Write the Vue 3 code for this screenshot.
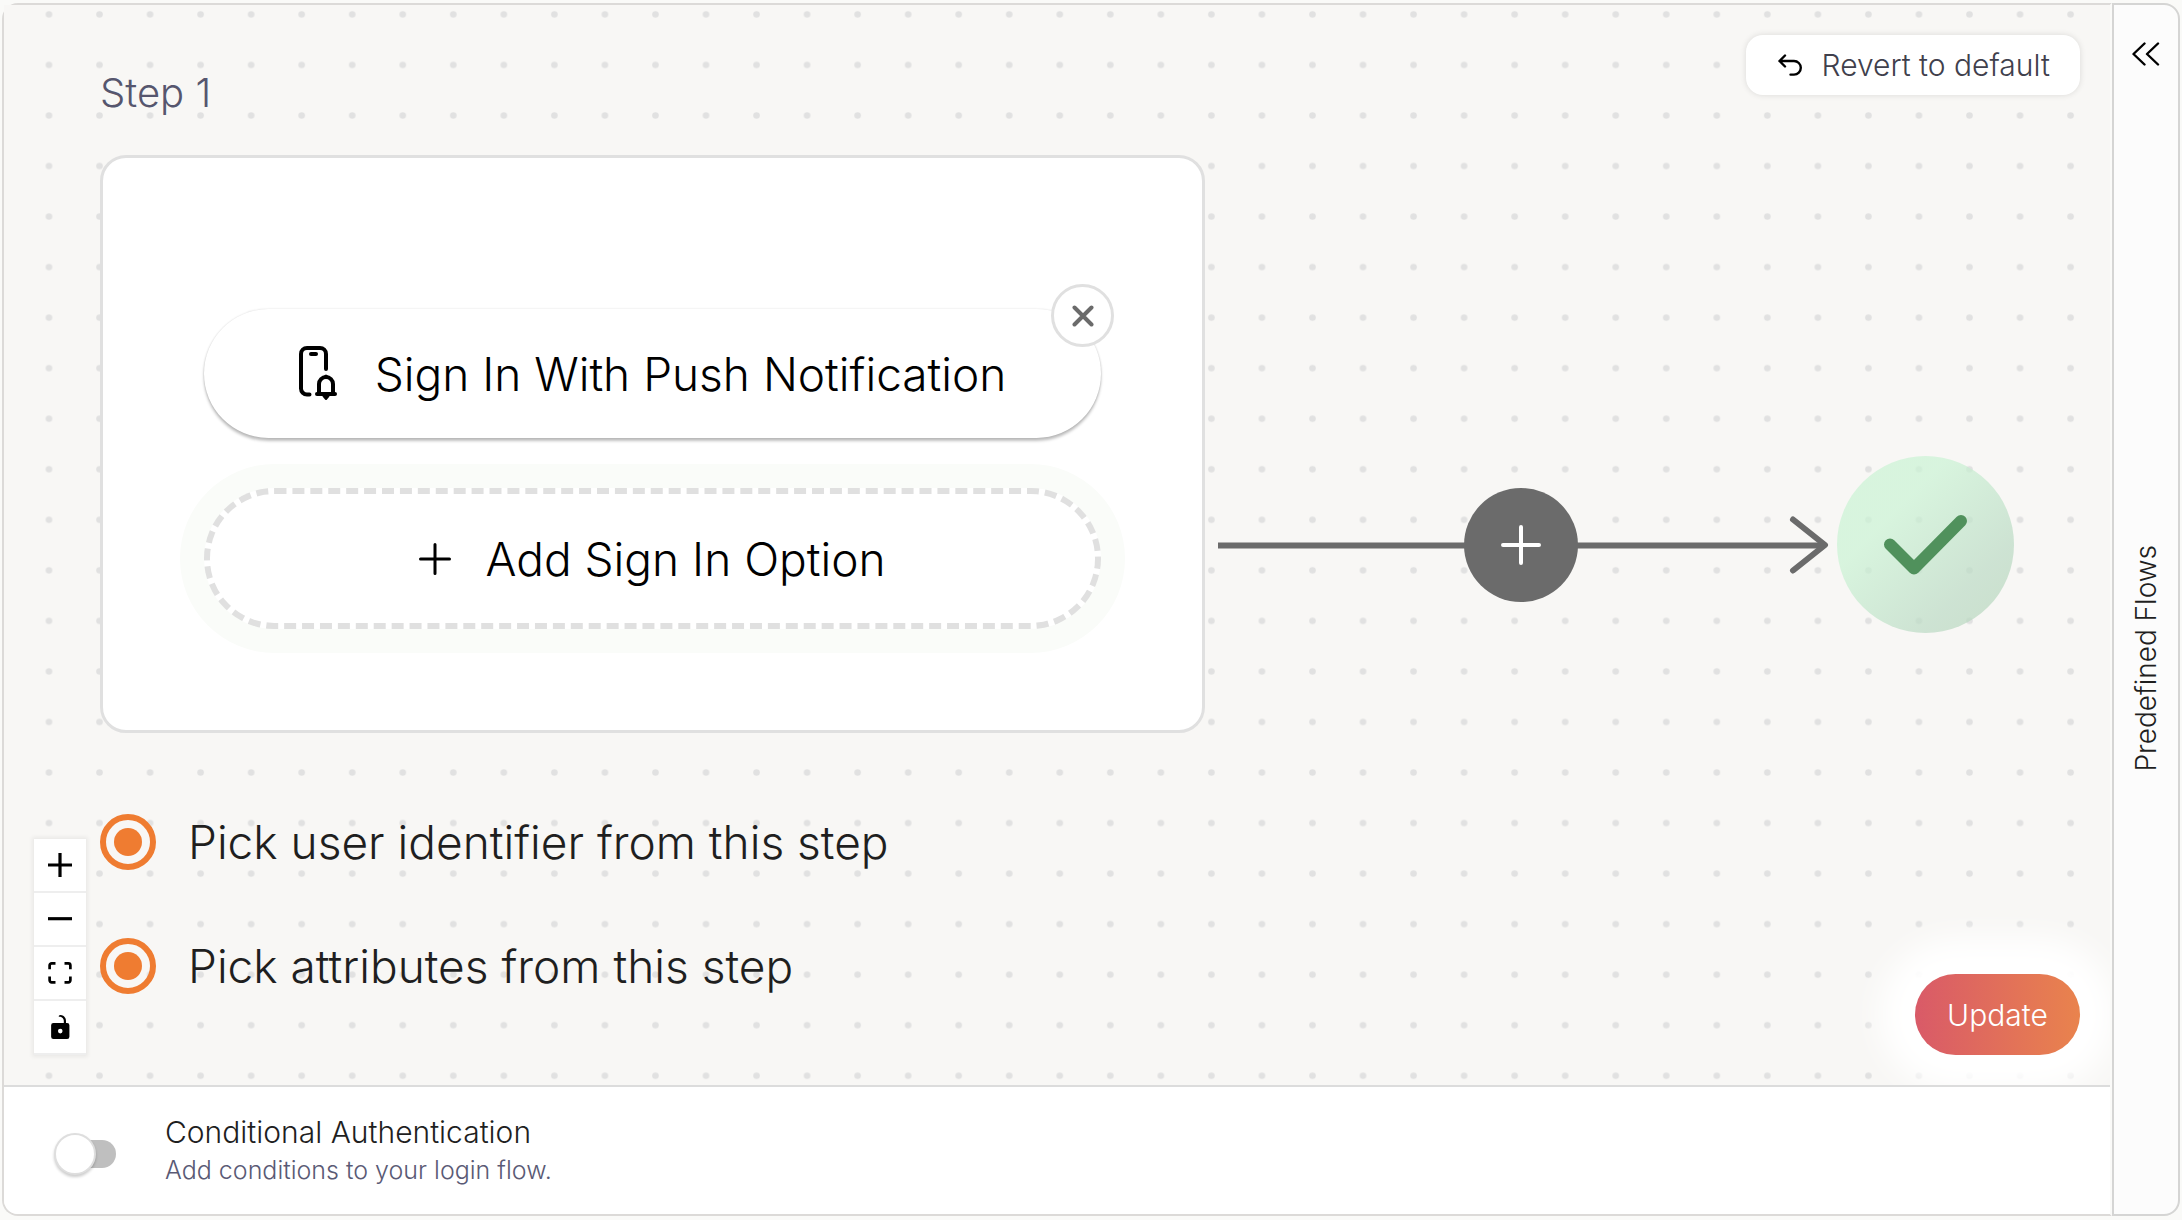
<script setup>
import { ref } from 'vue'

const zoom = 2.527
const identifierStep = ref('step-1')
const attributeStep = ref('step-1')
const conditional = ref(false)

const controls = [
  { label: 'Zoom in', box: '0 0 32 32', w: 24, h: 24, d: 'M32 18.133H18.133V32h-4.266V18.133H0v-4.266h13.867V0h4.266v13.867H32z' },
  { label: 'Zoom out', box: '0 0 32 5', w: 24, h: 4, d: 'M0 0h32v4.2H0z' },
  { label: 'Fit view', box: '0 0 32 30', w: 24, h: 22, d: 'M3.692 4.63c0-.53.4-.938.939-.938h5.215V0H4.708C2.13 0 0 2.054 0 4.63v5.216h3.692V4.631zM27.354 0h-5.2v3.692h5.17c.53 0 .984.4.984.939v5.215H32V4.631A4.624 4.624 0 0027.354 0zm.954 24.83c0 .532-.4.94-.939.94h-5.215v3.768h5.215c2.577 0 4.631-2.13 4.631-4.707v-5.139h-3.692v5.139zm-23.677.94c-.531 0-.939-.4-.939-.94v-5.138H0v5.139c0 2.577 2.13 4.707 4.708 4.707h5.138V25.77H4.631z' },
  { label: 'Lock canvas', box: '0 0 25 32', w: 19, h: 24, d: 'M21.333 10.667H19.81V7.619C19.81 3.429 16.38 0 12.19 0c-4.114 1.828-1.37 2.133.305 2.438 1.676.305 4.42 2.59 4.42 5.181v3.048H3.047A3.056 3.056 0 000 13.714v15.238A3.056 3.056 0 003.048 32h18.285a3.056 3.056 0 003.048-3.048V13.714a3.056 3.056 0 00-3.048-3.047zM12.19 24.533a3.056 3.056 0 01-3.047-3.047 3.056 3.056 0 013.047-3.048 3.056 3.056 0 013.048 3.048 3.056 3.056 0 01-3.048 3.047z' },
]
</script>

<template>
  <div class="builder">
    <main class="editor">
      <section class="canvas" aria-label="Login flow">
        <svg class="grid" aria-hidden="true">
          <defs>
            <pattern id="dots" width="20" height="20" x="8" y="-6.2" patternUnits="userSpaceOnUse" :patternTransform="`translate(-0.5 -0.2) scale(${zoom})`">
              <circle cx="10" cy="10" r="1.3" fill="#e1e1e1" />
            </pattern>
          </defs>
          <rect width="100%" height="100%" fill="url(#dots)" />
        </svg>

        <article class="step">
          <h2 class="step-title">Step 1</h2>
          <div class="card">
            <div class="option">
              <svg width="38" height="55" viewBox="0 0 38 55" fill="none" stroke="#000" stroke-width="4" stroke-linecap="round" stroke-linejoin="round" aria-hidden="true">
                <path d="M10.5 48.5H8a6 6 0 0 1-6-6V8a6 6 0 0 1 6-6h13a6 6 0 0 1 6 6v15" />
                <path d="M12 8h5" />
                <path d="M20 46.500V38a7 7 0 0 1 14 0v8.500" stroke-width="4" />
                <path d="M18 48h18" stroke-width="4" />
                <path d="M24.500 50h5l-2.500 3z M25 31l2-1.500 2 1.500z" fill="#000" stroke-width="2" />
              </svg>
              <span>Sign In With Push Notification</span>
              <button class="remove" type="button" aria-label="Remove option">
                <svg width="22" height="22" viewBox="0 0 22 22" stroke="#6b6b6b" stroke-width="4" stroke-linecap="round" aria-hidden="true">
                  <path d="M2.500 2.500l17 17M19.500 2.500l-17 17" />
                </svg>
              </button>
            </div>
            <button class="add-option" type="button">
              <svg width="32" height="32" viewBox="0 0 32 32" stroke="#000" stroke-width="3" stroke-linecap="round" aria-hidden="true">
                <path d="M16 1.500v29M1.500 16h29" />
              </svg>
              <span>Add Sign In Option</span>
            </button>
          </div>
          <div class="picks">
            <label class="pick">
              <input v-model="identifierStep" type="radio" name="identifier" value="step-1">
              <span>Pick user identifier from this step</span>
            </label>
            <label class="pick">
              <input v-model="attributeStep" type="radio" name="attributes" value="step-1">
              <span>Pick attributes from this step</span>
            </label>
          </div>
        </article>

        <svg class="edge" width="612" height="114" viewBox="0 0 612 114" fill="none" stroke="#6b6b6b" stroke-width="6" aria-hidden="true">
          <path d="M0 57.500H605" />
          <path d="M575 31.500L607 57l-32 25.500" stroke-linecap="round" stroke-linejoin="round" />
        </svg>
        <button class="add-step" type="button" aria-label="Add step">
          <svg width="40" height="40" viewBox="0 0 40 40" stroke="#fff" stroke-width="4" stroke-linecap="round" aria-hidden="true">
            <path d="M20 2v36M2 20h36" />
          </svg>
        </button>
        <div class="done" role="img" aria-label="Login complete">
          <svg width="177" height="177" viewBox="0 0 177 177" fill="none" stroke="#50915c" stroke-width="12" stroke-linecap="round" stroke-linejoin="round" aria-hidden="true">
            <path d="M53 88.500L77 112.500L124 65" />
          </svg>
        </div>

        <button class="revert" type="button">
          <svg width="24" height="22" viewBox="0 0 24 22" fill="none" stroke="#000" stroke-width="2.400" stroke-linecap="round" stroke-linejoin="round" aria-hidden="true">
            <path d="M7 1.500L1.500 7L7 12.500M1.500 7H16a6.800 6.800 0 0 1 0 13.600H12.500" />
          </svg>
          <span>Revert to default</span>
        </button>

        <div class="controls">
          <button v-for="c in controls" :key="c.label" type="button" :aria-label="c.label">
            <svg :width="c.w" :height="c.h" :viewBox="c.box" aria-hidden="true"><path :d="c.d" /></svg>
          </button>
        </div>

        <button class="update" type="button">Update</button>
      </section>

      <footer class="conditional">
        <input id="conditional" v-model="conditional" class="toggle" type="checkbox" role="switch">
        <div>
          <label class="conditional-title" for="conditional">Conditional Authentication</label>
          <p class="conditional-hint">Add conditions to your login flow.</p>
        </div>
      </footer>
    </main>

    <aside class="flows">
      <button class="expand" type="button" aria-label="Expand predefined flows">
        <svg width="28" height="24" viewBox="0 0 28 24" fill="none" stroke="#000" stroke-width="2.400" stroke-linecap="round" stroke-linejoin="round" aria-hidden="true">
          <path d="M12.500 1.500L1.500 12l11 10.500M26 1.500L15 12l11 10.500" />
        </svg>
      </button>
      <div class="flows-label"><span>Predefined Flows</span></div>
    </aside>
  </div>
</template>

<style>
body {
  margin: 0;
  background: #fafaf8;
}
</style>

<style scoped>
.builder {
  box-sizing: border-box;
  display: flex;
  min-height: 100vh;
  padding: 3px 2px 4px;
  font-family: Inter, "Liberation Sans", sans-serif;
  font-weight: 300;
  color: #1f1f1f;
}

button {
  margin: 0;
  padding: 0;
  border: 0;
  background: none;
  font: inherit;
  color: inherit;
  cursor: pointer;
  white-space: nowrap;
}

svg {
  display: block;
  flex: none;
}

.editor {
  flex: 1;
  display: flex;
  flex-direction: column;
  border: 2px solid #dcdad8;
  border-right-color: #fafaf8;
  border-radius: 16px 0 0 16px;
}

.canvas {
  position: relative;
  flex: 1;
  min-height: 1060px;
  overflow: hidden;
  background: #f8f7f5;
}

.grid {
  position: absolute;
  inset: 0;
  width: 100%;
  height: 100%;
}

.step {
  position: absolute;
  left: 96px;
  top: 64px;
}

.step-title {
  margin: 0 0 38px;
  font-size: 40px;
  font-weight: inherit;
  line-height: 48px;
  color: #56566e;
}

.card {
  box-sizing: border-box;
  display: flex;
  flex-direction: column;
  gap: 50px;
  width: 1105px;
  padding: 151px 101px 101px;
  border: 3px solid #e0e0e0;
  border-radius: 26px;
  background: #fff;
}

.option,
.add-option {
  box-sizing: border-box;
  display: flex;
  align-items: center;
  justify-content: center;
  border-radius: 71px;
  background: #fff;
  font-size: 46px;
  color: #000;
}

.option {
  position: relative;
  gap: 38px;
  height: 129px;
  box-shadow: 0 3px 3px rgba(0, 0, 0, 0.25), 0 0 2px rgba(0, 0, 0, 0.15);
}

.add-option {
  gap: 34px;
  height: 141px;
  border: 6px dashed #e0e0e0;
  box-shadow: 0 0 0 24px #fafcf9;
}

.remove {
  position: absolute;
  top: -25px;
  right: -13px;
  box-sizing: border-box;
  display: grid;
  place-items: center;
  width: 63px;
  height: 63px;
  border: 3px solid #e0e0e0;
  border-radius: 50%;
  background: #fff;
}

.picks {
  display: flex;
  flex-direction: column;
  gap: 68px;
  margin-top: 81px;
}

.pick {
  display: flex;
  align-items: center;
  gap: 32px;
  height: 56px;
  font-size: 46px;
}

.pick input {
  appearance: none;
  display: grid;
  place-items: center;
  width: 56px;
  height: 56px;
  margin: 0;
  border: 6px solid #ef7c31;
  border-radius: 50%;
}

.pick input:checked::before {
  content: "";
  width: 28px;
  height: 28px;
  border-radius: 50%;
  background: #ef7c31;
}

.edge {
  position: absolute;
  left: 1214px;
  top: 483px;
}

.add-step {
  position: absolute;
  left: 1460px;
  top: 483px;
  display: grid;
  place-items: center;
  width: 114px;
  height: 114px;
  border-radius: 50%;
  background: #6b6b6b;
}

.done {
  position: absolute;
  left: 1833px;
  top: 451px;
  border-radius: 50%;
  background: linear-gradient(135deg, rgba(202, 243, 212, 0.7) 32%, rgba(187, 218, 196, 0.7) 74%, rgba(181, 213, 186, 0.7) 100%);
}

.revert {
  position: absolute;
  top: 30px;
  right: 30px;
  display: flex;
  align-items: center;
  gap: 20px;
  height: 60px;
  padding: 0 30px 0 32px;
  border-radius: 17px;
  background: #fff;
  box-shadow: 0 0 6px rgba(0, 0, 0, 0.12);
  font-size: 30px;
  color: #40404c;
}

.controls {
  position: absolute;
  left: 30px;
  bottom: 30px;
  box-shadow: 0 0 4px 2px rgba(0, 0, 0, 0.06);
}

.controls button {
  display: grid;
  place-items: center;
  width: 52px;
  height: 54px;
  border-bottom: 2px solid #eee;
  background: #fff;
}

.update {
  position: absolute;
  right: 30px;
  bottom: 30px;
  min-width: 165px;
  height: 81px;
  border-radius: 41px;
  background: linear-gradient(90deg, #d95a68, #e9834d);
  box-shadow: 0 0 32px 36px #fff;
  font-size: 30px;
  color: #fff;
}

.conditional {
  display: flex;
  align-items: center;
  gap: 49px;
  padding: 26px 50px 25px;
  border-top: 2px solid #dcdcdc;
  border-radius: 0 0 0 14px;
  background: #fff;
}

.toggle {
  appearance: none;
  flex: none;
  display: flex;
  align-items: center;
  width: 62px;
  height: 42px;
  margin: 6px 0 0;
}

.toggle::before {
  content: "";
  box-sizing: border-box;
  width: 42px;
  height: 42px;
  border: 2px solid #dedede;
  border-radius: 50%;
  background: #fff;
  box-shadow: 0 2px 3px rgba(0, 0, 0, 0.2);
  z-index: 1;
}

.toggle::after {
  content: "";
  width: 60px;
  height: 28px;
  margin-left: -40px;
  border-radius: 14px;
  background: #bfbfbf;
}

.toggle:checked {
  flex-direction: row-reverse;
}

.conditional-title,
.conditional-hint {
  display: block;
  margin: 0;
  line-height: 38px;
}

.conditional-title {
  font-size: 30px;
}

.conditional-hint {
  font-size: 25px;
  color: #5a5a75;
}

.flows {
  box-sizing: border-box;
  flex: none;
  display: flex;
  flex-direction: column;
  width: 68px;
  border: 2px solid #d5d5d4;
  border-radius: 0 16px 16px 0;
  background: #fcfcfc;
}

.expand {
  display: grid;
  place-items: center;
  height: 98px;
}

.flows-label {
  flex: 1;
  display: grid;
  place-items: center;
  font-size: 28px;
}

.flows-label span {
  writing-mode: vertical-rl;
  transform: rotate(180deg);
}
</style>
